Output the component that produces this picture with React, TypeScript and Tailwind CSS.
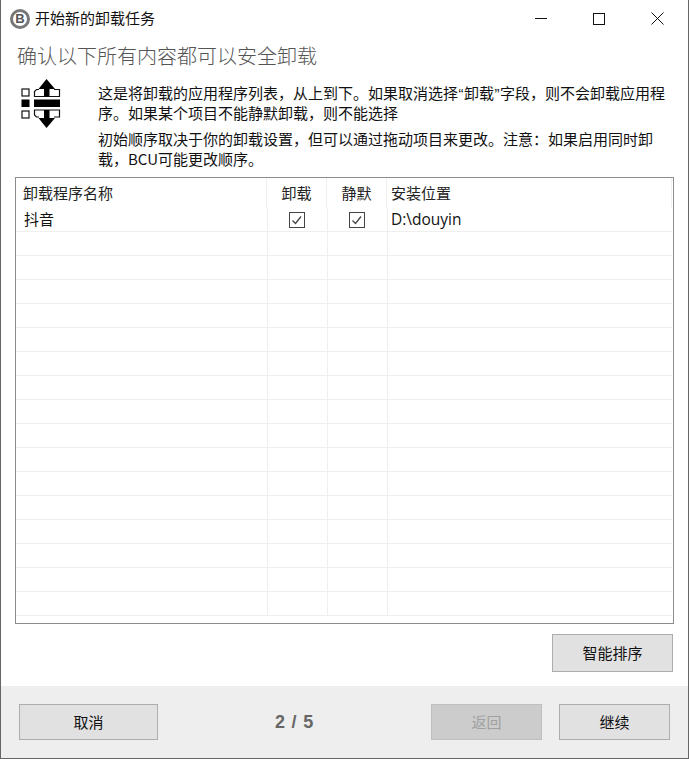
import React from "react";

const cjk = "font-['Noto_Sans_CJK_SC','Noto_Sans',sans-serif]";

const SortIcon = () => (
  <svg width="40" height="50" viewBox="0 0 40 50" className="shrink-0">
    <g fill="none" stroke="#111" strokeWidth="1.2">
      <rect x="1" y="10" width="7" height="7" />
      <rect x="1" y="32" width="7" height="7" />
      <path d="M18 10.5H15.5L13.5 12.5V17.5H38.5V10.5H33" />
      <path d="M18 38H15.5L13.5 36V31H38.5V38H33" />
    </g>
    <rect x="0.5" y="20.5" width="8" height="7.5" fill="#000" />
    <rect x="13" y="20.5" width="26" height="7.5" fill="#000" />
    <path d="M25.5 0L34 10H28.5V17.5H23V10H17.5Z" fill="#000" />
    <path d="M25.5 49L34 39H28.5V31H23V39H17.5Z" fill="#000" />
  </svg>
);

const Check = () => (
  <span className="w-4 h-4 mr-px border border-[#444] flex items-center justify-center bg-white">
    <svg width="14" height="14" viewBox="0 0 14 14">
      <path d="M2.5 7.5L5.5 10.5L11 3.5" fill="none" stroke="#444" strokeWidth="1.3" />
    </svg>
  </span>
);

const Btn = ({ label, className }: { label: string; className: string }) => (
  <button className={`border flex items-center justify-center text-[15px] ${className}`}>
    {label}
  </button>
);

const Row = ({ children }: { children?: React.ReactNode[] }) => (
  <div className="flex h-6 shrink-0 border-b border-[#efefef] w-[656px] text-[15px] text-[#111]">
    <div className="w-[252px] border-r border-[#efefef] pl-2 flex items-center">{children?.[0]}</div>
    <div className="w-[60px] border-r border-[#efefef] flex items-center justify-center">{children?.[1]}</div>
    <div className="w-[60px] border-r border-[#efefef] flex items-center justify-center">{children?.[2]}</div>
    <div className="flex-1 pl-[3px] flex items-center">{children?.[3]}</div>
  </div>
);

export default function App() {
  const empty = Array.from({ length: 16 }, (_, i) => i);
  const quote = "inline-block w-[6px] text-center leading-none font-['Liberation_Sans',sans-serif]";
  return (
    <div className={`w-[689px] h-[759px] bg-white flex flex-col overflow-hidden border-l border-r border-b border-[#666] text-[#111] ${cjk}`}>
      {/* Title bar */}
      <div className="h-[37px] shrink-0 flex items-center pl-[9px] pr-6">
        <div className="w-5 h-5 rounded-full border-[3px] border-[#777] flex items-center justify-center text-[13px] font-bold text-[#555] font-['Liberation_Sans',sans-serif]">
          B
        </div>
        <span className="ml-[5px] text-[15px] text-[#111]">开始新的卸载任务</span>
        <div className="ml-auto flex items-center gap-[46px]">
          <svg width="12" height="12" viewBox="0 0 12 12"><path d="M0 5.5H12" stroke="#111" /></svg>
          <svg width="12" height="12" viewBox="0 0 12 12"><rect x="0.5" y="0.5" width="11" height="11" fill="none" stroke="#111" /></svg>
          <svg width="13" height="13" viewBox="0 0 13 13"><path d="M0.5 0.5L12.5 12.5M12.5 0.5L0.5 12.5" stroke="#111" /></svg>
        </div>
      </div>

      {/* Heading */}
      <div className="h-[38px] shrink-0 pl-4 flex items-center text-[20px] font-light text-[#555]">
        确认以下所有内容都可以安全卸载
      </div>

      {/* Description */}
      <div className="flex h-[102px] shrink-0 pl-5 pt-[4px]">
        <SortIcon />
        <div className="ml-[37px] w-[572px] pt-[4px] text-[15px] leading-5 text-[#111]">
          <p className="whitespace-nowrap">
            这是将卸载的应用程序列表，从上到下。如果取消选择<span className={quote}>“</span>卸载<span className={quote}>”</span>字段，则不会卸载应用程
          </p>
          <p>序。如果某个项目不能静默卸载，则不能选择</p>
          <p className="mt-[6px]">初始顺序取决于你的卸载设置，但可以通过拖动项目来更改。注意：如果启用同时卸载，BCU可能更改顺序。</p>
        </div>
      </div>

      {/* List */}
      <div className="mx-[14px] h-[447px] shrink-0 border border-[#8c8c8c] overflow-hidden flex flex-col">
        <div className="flex h-[30px] shrink-0 w-[656px] text-[15px] text-[#222]">
          <div className="w-[251px] border-r border-[#efefef] pl-[7px] flex items-center">卸载程序名称</div>
          <div className="w-[60px] border-r border-[#efefef] flex items-center justify-center">卸载</div>
          <div className="w-[60px] border-r border-[#efefef] flex items-center justify-center">静默</div>
          <div className="flex-1 border-r border-[#efefef] pl-[4px] flex items-center">安装位置</div>
        </div>
        <Row>
          {[
            <span key="n">抖音</span>,
            <Check key="a" />,
            <Check key="b" />,
            <span key="p" className="text-[15.5px] font-['Open_Sans',sans-serif]">D:\douyin</span>,
          ]}
        </Row>
        {empty.map((i) => (
          <Row key={i} />
        ))}
      </div>

      {/* Sort button */}
      <div className="h-[62px] shrink-0 flex justify-end items-start pt-[10px] pr-[15px]">
        <Btn label="智能排序" className="w-[121px] h-[38px] bg-[#e1e1e1] border-[#adadad] text-[#111]" />
      </div>

      {/* Footer */}
      <div className="flex-1 bg-[#eeeeee] flex items-center pl-[18px] pr-[18px]">
        <Btn label="取消" className="w-[139px] h-9 bg-[#e1e1e1] border-[#adadad] text-[#111]" />
        <span className="ml-[117px] text-[18px] font-bold text-[#666] font-['Liberation_Sans',sans-serif] tracking-[0.8px]">2 / 5</span>
        <Btn label="返回" className="ml-auto w-[111px] h-9 bg-[#cccccc] border-[#bfbfbf] text-[#a0a0a0]" />
        <Btn label="继续" className="ml-[17px] w-[111px] h-9 bg-[#e1e1e1] border-[#adadad] text-[#111]" />
      </div>
    </div>
  );
}
